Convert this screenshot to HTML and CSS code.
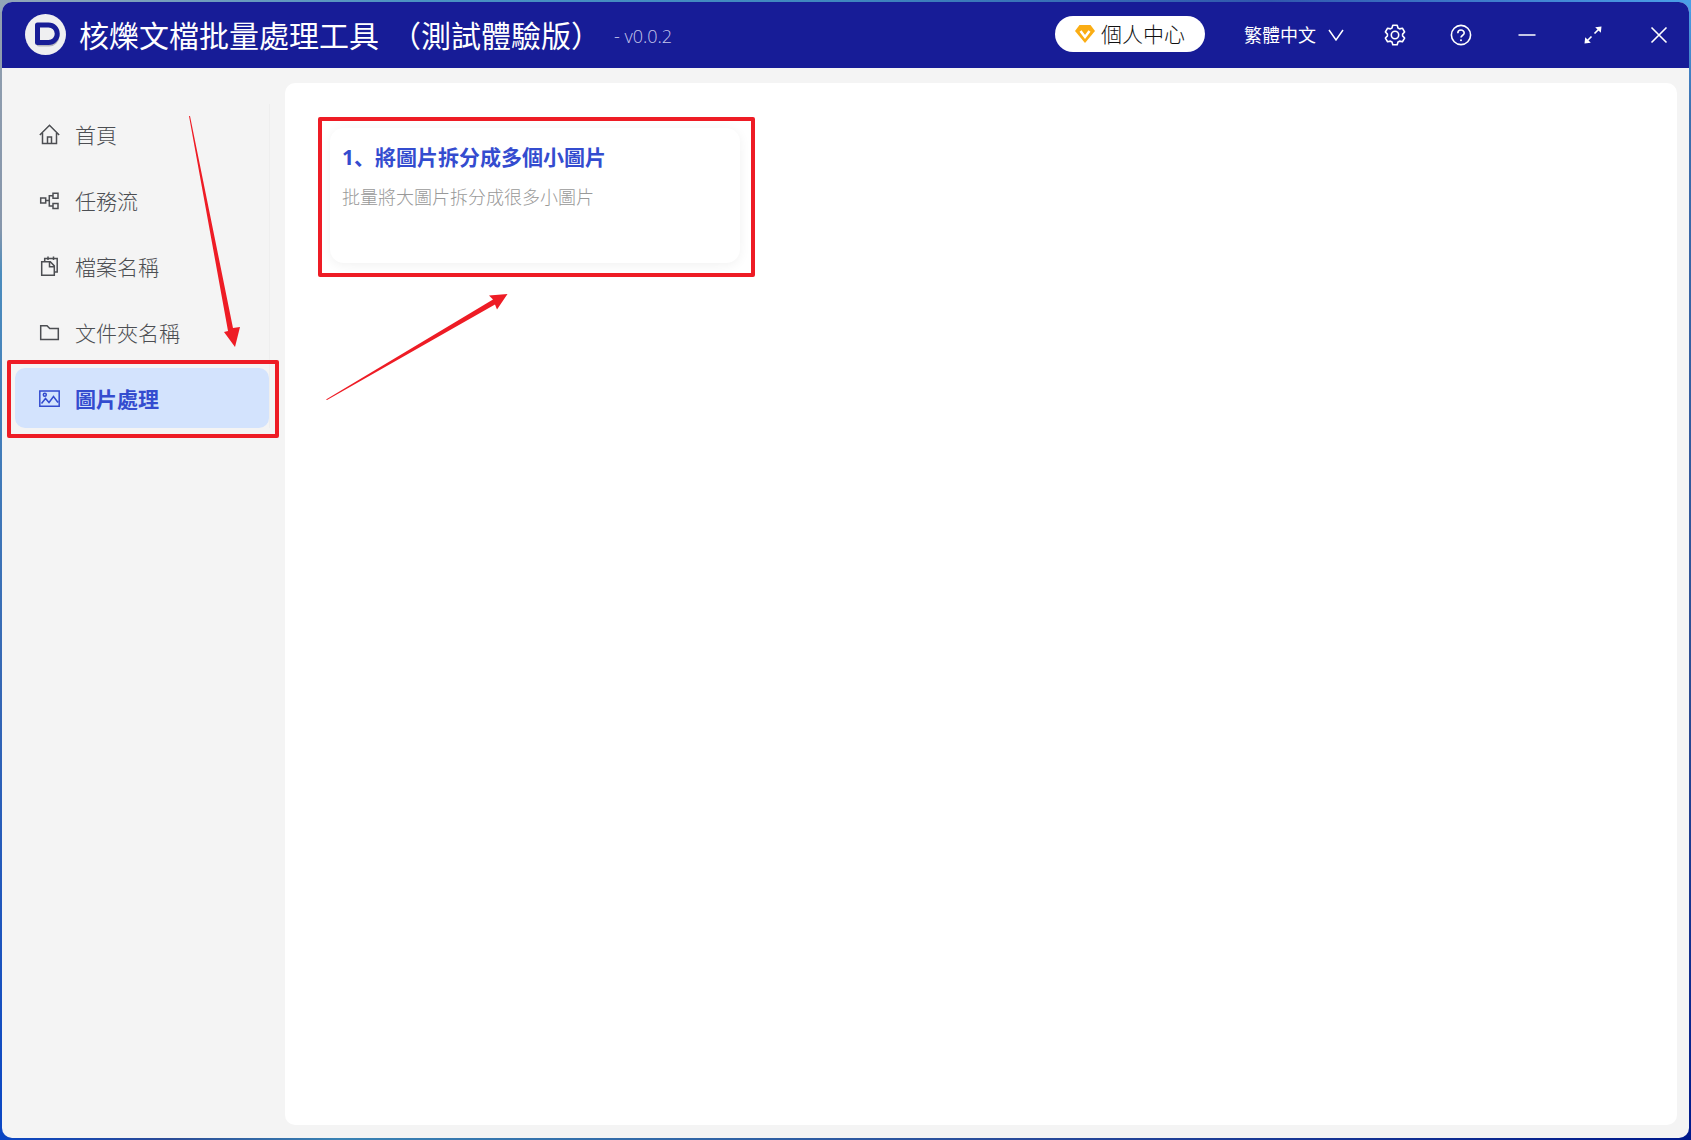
FILE: index.html
```html
<!DOCTYPE html>
<html lang="zh">
<head>
    <meta charset="UTF-8">
    <meta name="viewport" content="width=device-width, initial-scale=1.0">
    <title>核爍文檔批量處理工具</title>
    <link rel="stylesheet" href="styles.css">
</head>
<body>
    <div class="window">
        <header class="header">
            <svg class="logo" viewBox="0 0 41 41" aria-hidden="true">
                <circle cx="20.5" cy="20.5" r="20.5" fill="#efeff1"/>
                <path d="M14 14h10a8 8 0 0 1 0 16H14z" fill="none" stroke="#b4b4bc" stroke-width="5" stroke-linejoin="round"/>
                <path d="M12.500 11h11a8.700 8.700 0 0 1 0 17.500h-11z" fill="#efeff1" stroke="#181d97" stroke-width="5" stroke-linejoin="round"/>
            </svg>
            <h1>核爍文檔批量處理工具 <span>（測試體驗版）</span></h1>
            <span class="version">- v0.0.2</span>

            <div class="toolbar">
                <button type="button" class="account-btn">
                    <svg viewBox="0 0 20 20" aria-hidden="true">
                        <path d="M4.500 1h11L20 7 10 19 0 7z" fill="#faad14"/>
                        <path d="M5.500 7l4.500 6 4.500-6" fill="none" stroke="#fff" stroke-width="2.500"/>
                    </svg>
                    個人中心
                </button>
                <div class="language">
                    <select aria-label="語言">
                        <option>繁體中文</option>
                    </select>
                    <svg viewBox="0 0 16 16" aria-hidden="true"><path d="M1 3l7 10 7-10"/></svg>
                </div>
                <div class="controls">
                    <button type="button" aria-label="設定">
                        <svg viewBox="-12 -12 24 24">
                            <path d="M-3-7L-2.200-9.800H2.200L3-7 4.600-6.100 7.400-6.800 9.600-3 7.600-.9V.9L9.600 3 7.400 6.800 4.600 6.100 3 7 2.200 9.800H-2.200L-3 7-4.600 6.100-7.400 6.800-9.600 3-7.600.9V-.9L-9.600-3-7.400-6.800-4.600-6.100z"/>
                            <circle r="3.700"/>
                        </svg>
                    </button>
                    <button type="button" aria-label="說明">
                        <svg viewBox="-12 -12 24 24">
                            <circle r="9.600"/>
                            <path d="M-3.200-1.800C-3.200-6 3.200-6 3.200-1.900 3.200.2 0 .3 0 2.600"/>
                            <circle class="dot" cy="5.200" r="1"/>
                        </svg>
                    </button>
                    <button type="button" aria-label="最小化">
                        <svg viewBox="-12 -12 24 24"><path d="M-8.500 0h17"/></svg>
                    </button>
                    <button type="button" aria-label="最大化">
                        <svg viewBox="-12 -12 24 24">
                            <path d="M1.500-1.500L6-6M-1.500 1.500L-6 6"/>
                            <path class="dot" d="M8.500-8.500L7.800-2.200 2.200-7.800zM-8.500 8.500L-7.800 2.200-2.200 7.800z"/>
                        </svg>
                    </button>
                    <button type="button" aria-label="關閉">
                        <svg viewBox="-12 -12 24 24"><path d="M-7.500-7.500l15 15M7.500-7.500l-15 15"/></svg>
                    </button>
                </div>
            </div>
        </header>

        <div class="body">
            <aside class="sidebar">
                <nav class="menu">
                    <a href="#home">
                        <svg viewBox="0 0 21 21"><path d="M.8 11L10.500 1.200 20.200 11M3.500 9v10.500h14V9M8.500 19.500V13h4v6.500"/></svg>
                        首頁
                    </a>
                    <a href="#flow">
                        <svg viewBox="0 0 21 21"><path d="M1.700 8h5v5h-5zM14 3.200h5v5h-5zM14 13.500h5v5h-5zM6.700 10.500h3.600M14 5.700h-3.700V16H14"/></svg>
                        任務流
                    </a>
                    <a href="#files">
                        <svg viewBox="0 0 21 21"><path d="M2.700 5.700h8.600l4 4.200v9.400H2.700zM10.500 5.700v5h4.800M5.700 5.700V2.500h12.500V16h-2.900M9 .5v3.500M14.500.5v3.500"/></svg>
                        檔案名稱
                    </a>
                    <a href="#folders">
                        <svg viewBox="0 0 21 21"><path d="M1.700 3.700H8l2.800 2.900h8.500v10.900H1.700z"/></svg>
                        文件夾名稱
                    </a>
                    <a href="#images" class="active marked">
                        <svg viewBox="0 0 21 21"><path d="M.8 3h19.400v15.200H.8zM2.500 15.500l4-5 3.500 4 4.500-6 4.500 6"/><circle cx="5.800" cy="6.800" r="1.500"/></svg>
                        圖片處理
                    </a>
                </nav>
            </aside>

            <main class="content">
                <a href="#split" class="card marked">
                    <h2>1、將圖片拆分成多個小圖片</h2>
                    <p>批量將大圖片拆分成很多小圖片</p>
                </a>
            </main>
        </div>

        <!-- guide arrows -->
        <svg class="arrow arrow-menu" viewBox="0 0 52 232" aria-hidden="true">
            <path d="M0 0h1l43 212 7-1-5 20-11-15 4-1z"/>
        </svg>
        <svg class="arrow arrow-card" viewBox="0 0 182 106" aria-hidden="true">
            <path d="M0 105.500l167-100-4-4L181.500 0 171 15.500l-2-5L1 106z"/>
        </svg>
    </div>
</body>
</html>
```

FILE: styles.css
```css
:root {
    --primary: #171c97;
    --accent: #344ccf;
    --active-bg: #d3e3fd;
    --text: #4c4e52;
    --light-bg: #f4f4f4;
    --mark: #ee1c25;
}

* {
    margin: 0;
    padding: 0;
    box-sizing: border-box;
    font-family: "Open Sans", "Noto Sans CJK SC", sans-serif;
}

/* the desktop shows through as a thin edge */
body {
    min-height: 100vh;
    display: flex;
    padding: 2px;
    background:
        linear-gradient(90deg, #92a6b8, #4a92c2 25%, #3f87bf 50%, #3157ad 75%, #4b9fe8) top / 100% 12px no-repeat,
        linear-gradient(90deg, #0a46c4, #2b4b96 10%, #3a83b4 20%, #294b9a 60%, #001a8c) bottom / 100% 12px no-repeat,
        linear-gradient(#92a0b0, #8696ab 20%, #4b8cbd 24%, #3567b4 60%, #0a46c4) left / 50% 100% no-repeat,
        linear-gradient(#4b9fe8, #3d6fae 10%, #2c4c92 60%, #001a8c) right / 50% 100% no-repeat;
}

svg {
    flex: none;
    fill: none;
    stroke: currentColor;
}

.logo {
    width: 41px;
    height: 41px;
    stroke: none;
}

.window {
    position: relative;
    flex: 1;
    display: flex;
    flex-direction: column;
    border-radius: 10px;
    overflow: hidden;
    background: var(--light-bg);
}

.header {
    display: flex;
    align-items: center;
    height: 66px;
    padding: 0 18px 2px 23px;
    background: var(--primary);
    color: white;
}

.header h1 {
    display: flex;
    gap: 12px;
    margin-left: 13px;
    padding-top: 4px;
    font-size: 30px;
    font-weight: 400;
    line-height: 40px;
    white-space: nowrap;
}

.version {
    margin-left: 13px;
    padding-top: 4px;
    font-size: 18px;
    font-weight: 300;
    color: #c4c6ea;
    white-space: nowrap;
}

.toolbar {
    display: flex;
    align-items: center;
    gap: 39px;
    margin-left: auto;
}

.account-btn {
    display: flex;
    align-items: center;
    gap: 6px;
    height: 36px;
    padding: 0 20px 2px;
    border: none;
    border-radius: 18px;
    background: white;
    color: #111;
    font-size: 21px;
    font-weight: 300;
    cursor: pointer;
}

.account-btn svg {
    width: 20px;
    height: 20px;
    margin-top: 2px;
    stroke: none;
}

.language {
    display: grid;
    align-items: center;
}

.language select,
.language svg {
    grid-area: 1 / 1;
}

.language select {
    appearance: none;
    padding: 2px 28px 0 0;
    border: none;
    background: none;
    color: white;
    font-size: 18px;
    cursor: pointer;
}

.language svg {
    justify-self: end;
    width: 16px;
    height: 16px;
    margin-top: 2px;
    stroke-width: 1.5;
    pointer-events: none;
}

.controls {
    display: flex;
    gap: 42px;
    padding-top: 2px;
}

.controls button {
    width: 24px;
    height: 24px;
    border: none;
    background: none;
    color: white;
    cursor: pointer;
}

.controls svg {
    display: block;
    width: 24px;
    height: 24px;
    stroke-width: 1.6;
    stroke-linejoin: round;
}

.controls .dot {
    fill: currentColor;
    stroke: none;
}

.body {
    flex: 1;
    display: flex;
    padding: 15px 12px 13px 13px;
}

.sidebar {
    flex: none;
    width: 270px;
    padding: 21px 15px 0 0;
}

.menu {
    display: flex;
    flex-direction: column;
    gap: 6px;
    border-right: 1px solid #eeeeee;
}

.menu a {
    display: flex;
    align-items: center;
    gap: 15px;
    height: 60px;
    padding-left: 24px;
    border-radius: 10px;
    color: var(--text);
    font-size: 21px;
    font-weight: 300;
    text-decoration: none;
}

.menu svg {
    width: 21px;
    height: 21px;
    stroke-width: 1.5;
}

.menu a.active {
    background: var(--active-bg);
    color: var(--accent);
    font-weight: bold;
}

.content {
    flex: 1;
    padding: 45px;
    border-radius: 10px;
    background: white;
}

.card {
    display: block;
    width: 410px;
    min-height: 135px;
    padding: 13px 12px;
    border-radius: 14px;
    box-shadow: 0 2px 12px rgba(0, 0, 0, 0.06);
    text-decoration: none;
}

.card h2 {
    color: var(--accent);
    font-size: 21px;
    line-height: 32px;
}

.card p {
    margin-top: 11px;
    color: #999;
    font-size: 18px;
    font-weight: 300;
    line-height: 26px;
}

/* red guide frames and arrows */
.marked {
    position: relative;
}

.marked::after {
    content: "";
    position: absolute;
    inset: -8px -10px -10px -8px;
    border: 4px solid var(--mark);
    border-radius: 2px;
}

.card.marked::after {
    inset: -11px -15px -14px -12px;
}

.arrow {
    position: absolute;
    fill: var(--mark);
    stroke: none;
    pointer-events: none;
}

.arrow-menu {
    top: 114px;
    left: 187px;
    width: 52px;
    height: 232px;
}

.arrow-card {
    top: 292px;
    left: 324px;
    width: 182px;
    height: 106px;
}
```
